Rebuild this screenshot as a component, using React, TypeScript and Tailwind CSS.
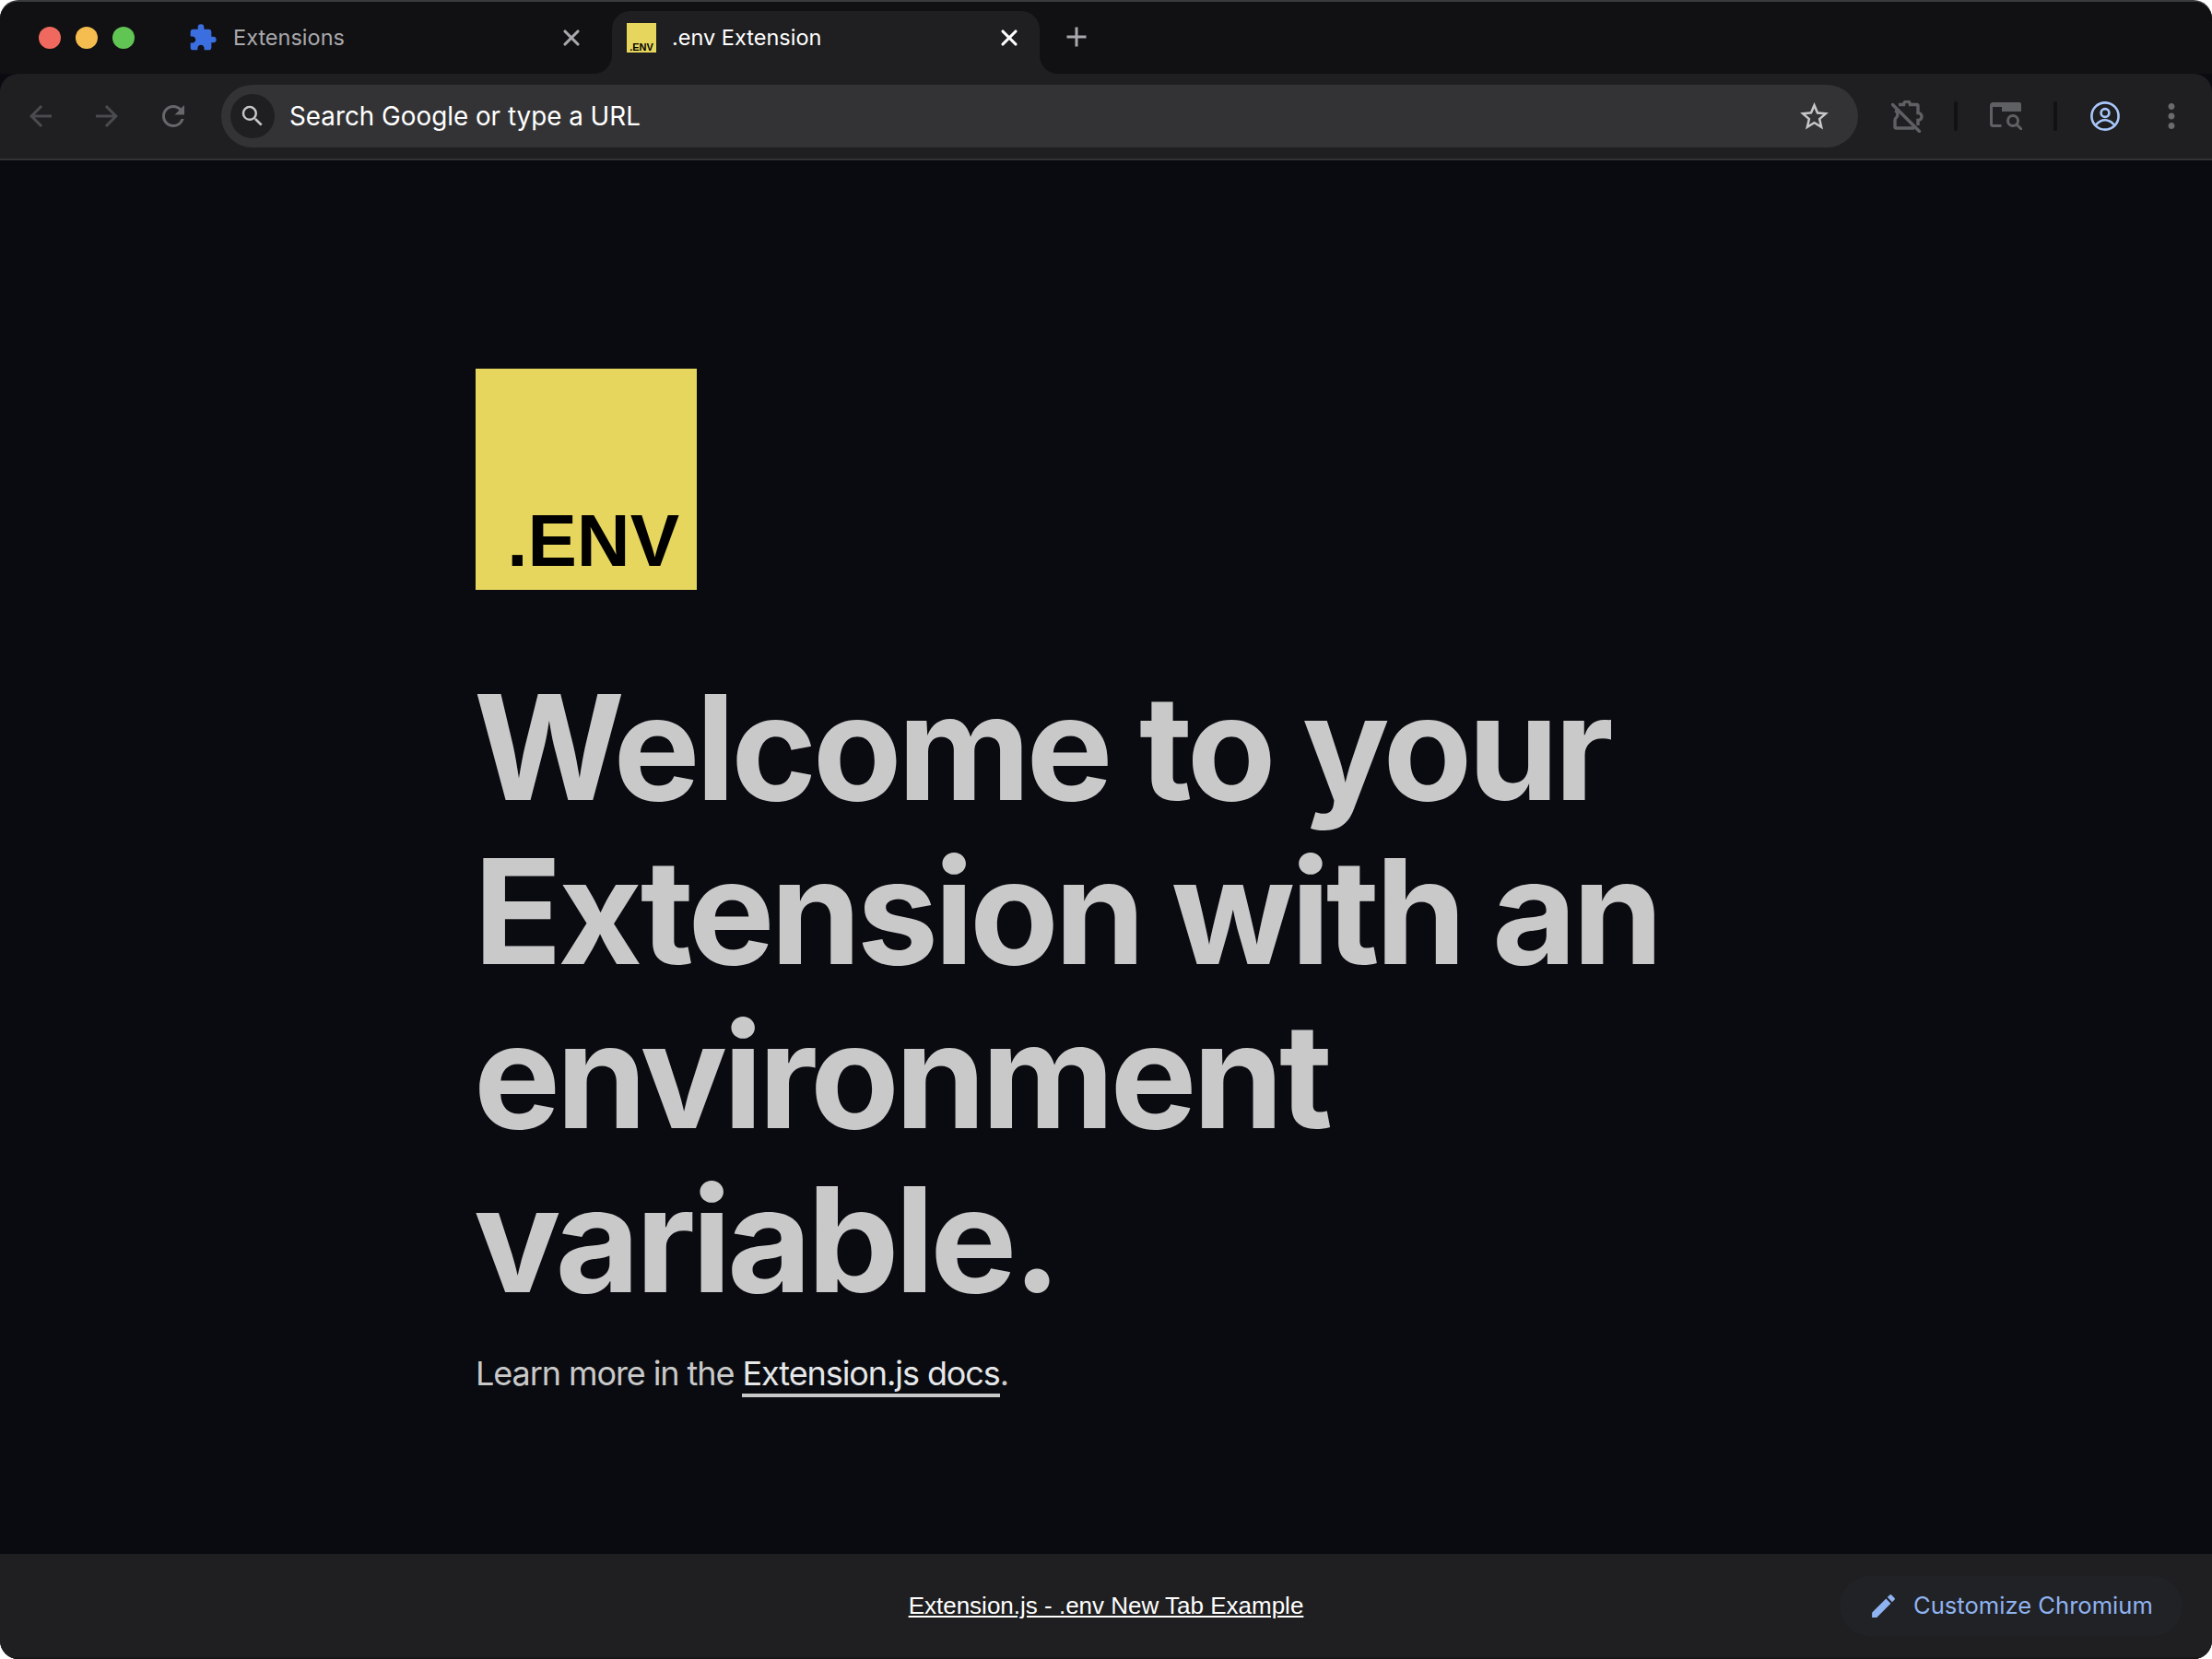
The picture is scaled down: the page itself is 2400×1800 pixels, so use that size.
import React from 'react';
import { X } from 'lucide-react';
import {
  MdAdd,
  MdArrowBack,
  MdArrowForward,
  MdEdit,
  MdExtension,
  MdMoreVert,
  MdRefresh,
  MdSearch,
  MdStarBorder,
} from 'react-icons/md';

const ExtensionOff = () => (
  <svg width="35" height="35" viewBox="0 0 35 35" fill="none" stroke="#5f6064" strokeWidth="3.4">
    <path d="M8 4.500h5.500a3.500 3.500 0 0 1 7 0h7a1.500 1.500 0 0 1 1.500 1.500v7.500a4 4 0 0 1 0 8v5.500" />
    <path d="M4 11a4.500 4.500 0 0 1 1.500 7.500c-1 .8-1.500 1.500-1.500 3v7A1.500 1.500 0 0 0 5.500 30H25" />
    <path d="M1.500 4.500l29 29" strokeLinecap="round" />
  </svg>
);

const SidePanelSearch = () => (
  <svg width="35" height="30" viewBox="0 0 35 30" className="text-[#5f6064]">
    <path d="M14 1.500H3.500a2 2 0 0 0-2 2v20a2 2 0 0 0 2 2h9" fill="none" stroke="currentColor" strokeWidth="3" />
    <path d="M13 0h19a2 2 0 0 1 2 2v8H13z" fill="currentColor" />
    <path d="M1.500 3.500h12" fill="none" stroke="currentColor" strokeWidth="3" />
    <circle cx="25" cy="20" r="5.500" fill="none" stroke="currentColor" strokeWidth="3" />
    <path d="M29 24l5 5" stroke="currentColor" strokeWidth="3" strokeLinecap="round" />
  </svg>
);

const Account = () => (
  <svg width="32" height="32" viewBox="0 0 32 32" fill="none" stroke="#a8c7fa" strokeWidth="2.6">
    <circle cx="16" cy="16" r="14.6" />
    <circle cx="16" cy="12.5" r="4.4" />
    <path d="M6 25.5c3-3.6 6.4-5.2 10-5.2s7 1.600 10 5.200" />
  </svg>
);

const App: React.FC = () => {
  return (
    <div className="w-[2400px] h-[1800px] bg-white font-['Inter',sans-serif] overflow-hidden">
      <div className="h-[1800px] flex flex-col rounded-[20px] overflow-hidden border-t-2 border-[#3a3b3d] bg-[#090b10]">
        {/* Tab strip */}
        <div className="h-[78px] shrink-0 flex items-start bg-[#111113]">
          <div className="flex items-center gap-4 pl-[42px] pt-[27px]">
            <span className="w-6 h-6 rounded-full bg-[#f0695e]" />
            <span className="w-6 h-6 rounded-full bg-[#f5bd4f]" />
            <span className="w-6 h-6 rounded-full bg-[#61c554]" />
          </div>

          <div className="ml-[61px] w-[457px] h-[78px] flex items-center text-[#a9a9ad]">
            <MdExtension size={32} className="text-[#3b6fdf] -ml-[3px] shrink-0" />
            <span className="ml-[17px] text-[23.500px]">Extensions</span>
            <X size={28} strokeWidth={2.7} className="ml-auto mr-[30px]" />
          </div>

          <div className="relative mt-[10px] w-[464px] h-[68px] flex items-center pb-[10px] pl-4 rounded-t-[20px] bg-[#1f1f21] text-white">
            <div className="absolute -left-5 bottom-0 w-5 h-5 bg-[#1f1f21]">
              <div className="w-5 h-5 rounded-br-[20px] bg-[#111113]" />
            </div>
            <div className="absolute -right-5 bottom-0 w-5 h-5 bg-[#1f1f21]">
              <div className="w-5 h-5 rounded-bl-[20px] bg-[#111113]" />
            </div>
            <div className="w-8 h-8 flex items-end justify-center bg-[#e6d65d] font-['Liberation_Sans',sans-serif] font-bold text-[11px] leading-[12px] text-black">
              .ENV
            </div>
            <span className="ml-[17px] text-[23.500px]">.env Extension</span>
            <X size={28} strokeWidth={2.7} className="ml-auto mr-[19px]" />
          </div>

          <MdAdd size={36} className="ml-[22px] mt-[20px] text-[#a9a9ad]" />
        </div>

        {/* Toolbar */}
        <div className="h-[94px] shrink-0 flex items-center pl-2 rounded-t-[20px] bg-[#1f1f21] border-b-2 border-[#323336]">
          <div className="w-[72px] flex justify-center text-[#4a4b4f]"><MdArrowBack size={36} /></div>
          <div className="w-[72px] flex justify-center text-[#4a4b4f]"><MdArrowForward size={36} /></div>
          <div className="w-[72px] flex justify-center text-[#66676b]"><MdRefresh size={36} /></div>

          <div className="ml-4 w-[1776px] h-[68px] flex items-center pl-[10px] pr-[29px] rounded-full bg-[#333335]">
            <div className="w-12 h-12 flex items-center justify-center rounded-full bg-[#1f1f21] text-[#c7c7c7]">
              <MdSearch size={30} />
            </div>
            <span className="ml-4 mt-[2px] text-[27.800px] text-white">Search Google or type a URL</span>
            <MdStarBorder size={37} className="ml-auto text-[#c7c7c7]" />
          </div>

          <div className="ml-[36px] flex"><ExtensionOff /></div>
          <div className="ml-[33px] w-1 h-8 rounded-sm bg-[#111113]" />
          <div className="ml-[35px] flex"><SidePanelSearch /></div>
          <div className="ml-[34px] w-1 h-8 rounded-sm bg-[#111113]" />
          <div className="ml-[36px] flex"><Account /></div>
          <MdMoreVert size={42} className="ml-[35px] text-[#6a6b6f]" />
        </div>

        {/* Page */}
        <main className="flex-1 pl-[516px] pt-[226px] text-[#c9c9c9]">
          <div className="w-[240px] h-[240px] flex items-end justify-end pr-[19px] pb-[16px] bg-[#e6d65d] font-['Liberation_Sans',sans-serif] font-bold text-[80px] leading-[74px] text-black">
            .ENV
          </div>
          <h1 className="mt-[82px] -ml-[2px] w-[1400px] text-[158px] leading-[178px] font-[750] tracking-[-0.029em]">
            Welcome to your Extension with an environment variable.
          </h1>
          <p className="mt-[29px] text-[36px] leading-[54px] tracking-[-0.03em]">
            Learn more in the{' '}
            <a className="text-[#e6e7e9] border-b-4 border-[#c9c9c9]">Extension.js docs</a>.
          </p>
        </main>

        {/* Footer */}
        <footer className="relative h-[114px] shrink-0 flex items-center justify-center bg-[#1f1f21] border-b-2 border-[#16171a]">
          <a className="font-['Liberation_Sans',sans-serif] text-[26px] text-white underline">
            Extension.js - .env New Tab Example
          </a>
          <button className="absolute right-[32px] top-[24px] h-[65px] w-[372px] flex items-center pl-[31px] rounded-full bg-[#212225] text-[#8fb2f0]">
            <MdEdit size={33} />
            <span className="ml-4 text-[25.600px]">Customize Chromium</span>
          </button>
        </footer>
      </div>
    </div>
  );
};

export default App;
